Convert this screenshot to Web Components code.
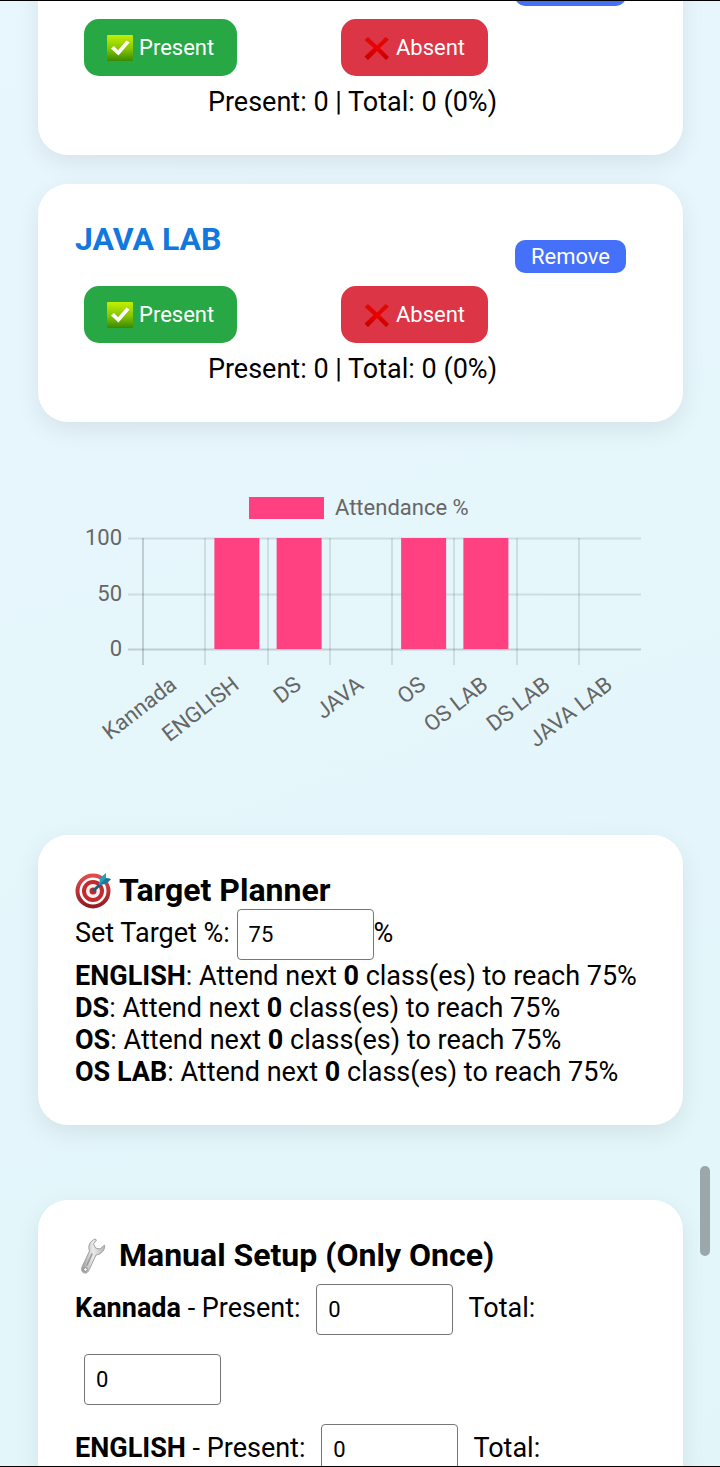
<!DOCTYPE html>
<html lang="en">
<head>
<meta charset="utf-8">
<meta name="viewport" content="width=device-width, initial-scale=1">
<title>Attendance Tracker</title>
<style>
  body { margin: 0; font: 27px/32px Roboto, "Liberation Sans", sans-serif; color: #000; }
</style>
</head>
<body>
<app-shell>
  <subject-card></subject-card>
  <subject-card name="JAVA LAB"></subject-card>
  <attendance-chart></attendance-chart>
  <target-planner></target-planner>
  <manual-setup></manual-setup>
</app-shell>

<script>
const define = (tag, markup, setup) => {
  const template = document.createElement('template');
  template.innerHTML = markup;
  customElements.define(tag, class extends HTMLElement {
    constructor() {
      super();
      this.attachShadow({ mode: 'open' }).append(template.content.cloneNode(true));
    }
    connectedCallback() { if (setup) setup(this, this.shadowRoot); }
  });
};

const inputStyle = `
  input { box-sizing: border-box; width: 137px; height: 51px; margin: 0; padding: 0 11px;
    border: 1px solid #767676; border-radius: 4px; background: #fff; color: #000;
    font: 22px/26px Roboto, "Liberation Sans", sans-serif; appearance: textfield; }
  input::-webkit-inner-spin-button { appearance: none; margin: 0; }`;

const headingStyle = `
  h3 { display: flex; align-items: center; gap: 7px; margin: 0; font-size: 32px; line-height: 37px; font-weight: 700; }
  svg { display: block; width: 37px; height: 37px; flex: none; }`;

/* Window frame with the scrolled page and its scroll thumb */
define('app-shell', `
  <style>
    :host { display: block; box-sizing: border-box; position: relative; height: 100vh; overflow: hidden;
      border-top: 1px solid #000; border-bottom: 1px solid #000;
      background: linear-gradient(160deg, #e8f6fd, #e2f6fa); }
    main { margin-top: -84px; padding: 0 37px 0 38px; }
    .thumb { position: absolute; right: 10px; top: 79.5%; width: 10px; height: 90px; border-radius: 5px; background: #9aa8ab; }
  </style>
  <main><slot></slot></main>
  <div class="thumb"></div>`);

define('surface-card', `
  <style>
    :host { display: block; padding: 37px; border-radius: 30px; background: #fff;
      box-shadow: 0 8px 24px rgba(0, 0, 0, .08); }
  </style>
  <slot></slot>`);

define('subject-card', `
  <style>
    :host { display: block; margin-bottom: 29px; }
    header { display: flex; justify-content: space-between; height: 56px; }
    h3 { margin: 0; font-size: 32px; line-height: 37px; color: #1178de; }
    button { border: 0; color: #fff; font: 22px/26px Roboto, "Liberation Sans", sans-serif; }
    .remove { min-width: 111px; height: 33px; margin: 19px 20px 0 0; padding: 0 15px; border-radius: 10px; background: #4570fa; }
    .marks { display: grid; grid-template-columns: 45% 55%; justify-items: start; }
    .marks button { display: flex; align-items: center; gap: 6px; height: 57px; margin: 9px; padding: 0 23px; border-radius: 15px; }
    .present { background: #28a745; }
    .absent { background: #dc3545; }
    svg { display: block; width: 26px; height: 28px; }
    p { margin: 0; padding: 1px 16px 0 0; text-align: center; }
  </style>
  <surface-card>
    <header><h3></h3><button class="remove" aria-label="Remove"></button></header>
    <div class="marks">
      <button class="present">
        <svg viewBox="0 0 26 28" aria-hidden="true">
          <defs><linearGradient id="g" x1="0" y1="0" x2="0" y2="1"><stop offset="0" stop-color="#c4f000"/><stop offset=".55" stop-color="#82c400"/><stop offset="1" stop-color="#388900"/></linearGradient></defs>
          <rect y="1" width="26" height="26" rx="1" fill="url(#g)"/>
          <path d="M4 14.5 7 12l4 4.300L19.500 6.500 22.500 8.500 11.500 21.500Z" fill="#fff"/>
        </svg><span>Present</span></button>
      <button class="absent">
        <svg viewBox="0 0 26 28" aria-hidden="true">
          <defs><linearGradient id="r" x1="0" y1="0" x2="0" y2="1"><stop offset="0" stop-color="#dc0909"/><stop offset=".5" stop-color="#ec0000"/><stop offset="1" stop-color="#bd0000"/></linearGradient></defs>
          <path d="M4 3 13 11.500 21.500 3 25 5.500 16 14 25 23 22 26 13 17 4 26 .500 22.500 9.500 14 .500 6Z" fill="url(#r)"/>
        </svg><span>Absent</span></button>
    </div>
    <p>Present: 0 | Total: 0 (0%)</p>
  </surface-card>`, (host, root) => {
    const name = host.getAttribute('name');
    if (!name) return;
    root.querySelector('h3').textContent = name;
    root.querySelector('.remove').textContent = 'Remove';
  });

/* Bar chart: eight equal columns over a 0-100 scale */
define('attendance-chart', `
  <style>
    :host { display: block; padding: 36px 36px 37px; }
    svg { display: block; width: 100%; height: auto; }
    text { font: 22px Roboto, "Liberation Sans", sans-serif; fill: #666; }
  </style>
  <svg viewBox="0 0 573 311" role="img" aria-label="Attendance % by subject"></svg>`, (host, root) => {
    const data = [['Kannada', 0], ['ENGLISH', 100], ['DS', 100], ['JAVA', 0], ['OS', 100], ['OS LAB', 100], ['DS LAB', 0], ['JAVA LAB', 0]];
    const left = 69, right = 567, top = 51, bottom = 162, step = (right - left) / data.length;
    let out = `<rect x="175" y="10" width="75" height="22" fill="#ff4081"/><text x="261" y="28">Attendance %</text>`;
    [100, 50, 0].forEach(v => {
      const y = Math.round(bottom - (bottom - top) * v / 100);
      out += `<path d="M54 ${y}.500H${right}" stroke="#000" stroke-opacity="${v ? .1 : .16}" stroke-width="2"/>
        <text x="48" y="${y + 7}" text-anchor="end">${v}</text>`;
    });
    data.forEach(([name, v], i) => {
      const x = left + i * step, c = x + step / 2;
      out += `<path d="M${Math.round(x)} ${top}V178" stroke="#000" stroke-opacity="${i ? .1 : .17}" stroke-width="2"/>`;
      if (v) out += `<rect x="${c - 22}" y="${top}" width="45" height="${(bottom - top) * v / 100}" fill="#ff4081"/>`;
      out += `<text transform="translate(${c - 1} 194) rotate(-38)" text-anchor="end" dy="8">${name}</text>`;
    });
    root.querySelector('svg').innerHTML = out;
  });

define('target-planner', `
  <style>
    :host { display: block; margin-bottom: 75px; }
    ${headingStyle}
    ${inputStyle}
    p { margin: 0; }
  </style>
  <surface-card>
    <h3><svg viewBox="0 0 37 37" aria-hidden="true">
      <defs><linearGradient id="t" x1="0" y1="0" x2="0" y2="1"><stop stop-color="#e24b4b"/><stop offset="1" stop-color="#941b20"/></linearGradient></defs>
      <circle cx="18" cy="19" r="15.500" fill="#fff" stroke="url(#t)" stroke-width="4"/>
      <circle cx="18" cy="19" r="9" fill="#f4f1f0" stroke="#c4292e" stroke-width="4"/>
      <circle cx="18" cy="19" r="3.500" fill="#c9252b"/>
      <path d="M18 19 30 8" stroke="#175f7c" stroke-width="3"/>
      <path d="M24 13 25 6 31 1 31 6 36 7 31 12Z" fill="#2c9db9"/>
      <path d="M25 12 31 6 36 7 31 12Z" fill="#1c7897"/>
    </svg>Target Planner</h3>
    <div><label for="target">Set Target %:</label> <input id="target" type="number" value="75">%</div>
    <p><b>ENGLISH</b>: Attend next <b>0</b> class(es) to reach 75%</p>
    <p><b>DS</b>: Attend next <b>0</b> class(es) to reach 75%</p>
    <p><b>OS</b>: Attend next <b>0</b> class(es) to reach 75%</p>
    <p><b>OS LAB</b>: Attend next <b>0</b> class(es) to reach 75%</p>
  </surface-card>`);

define('manual-setup', `
  <style>
    :host { display: block; }
    ${headingStyle}
    ${inputStyle}
    input { margin: 10px 9px 9px; }
  </style>
  <surface-card>
    <h3><svg viewBox="0 0 37 37" aria-hidden="true">
      <defs><linearGradient id="w" x1="0" y1="0" x2="1" y2="0"><stop stop-color="#9a9a9a"/><stop offset=".5" stop-color="#ececec"/><stop offset="1" stop-color="#b5b5b5"/></linearGradient></defs>
      <path d="M20 2C15 4 12.500 9 14.500 14L7 30C5.500 34 8 36.500 11 36 13 35.500 13.500 34 14.500 32L21 18C26 17.500 30.500 13 29.500 8L25 12 20.500 11 18.500 7 21.500 3Z" fill="url(#w)" stroke="#a2a2a2" stroke-width="1"/>
      <path d="M17 17 12 28" stroke="#999" stroke-width="1.500" stroke-linecap="round"/>
      <circle cx="10.500" cy="32.500" r="1.800" fill="#fff" stroke="#888"/>
    </svg>Manual Setup (Only Once)</h3>
    <div><label for="p1"><b>Kannada</b> - Present:</label> <input id="p1" type="number" value="0"> <label for="t1">Total:</label> <input id="t1" type="number" value="0"></div>
    <div><label for="p2"><b>ENGLISH</b> - Present:</label> <input id="p2" type="number" value="0"> <label for="t2">Total:</label> <input id="t2" type="number" value="0"></div>
  </surface-card>`);
</script>
</body>
</html>
